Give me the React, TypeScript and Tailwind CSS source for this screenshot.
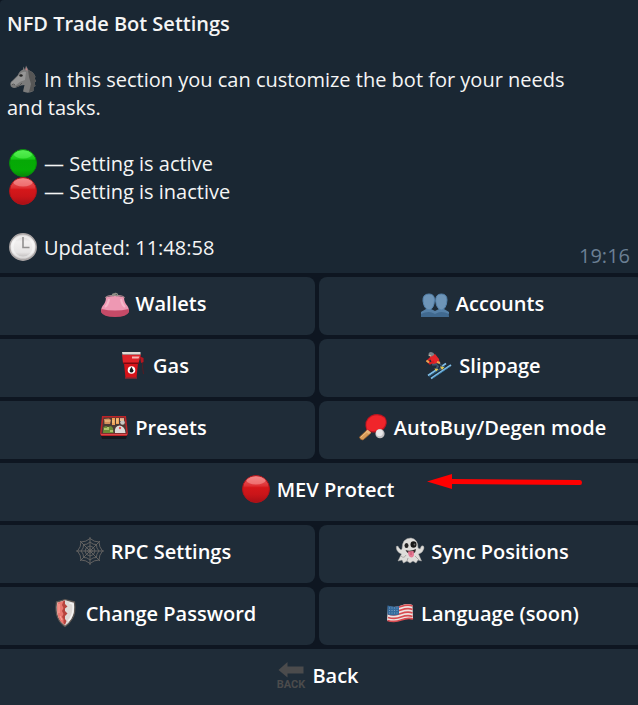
import type { ReactNode } from "react";

function Icon({ children }: { children: ReactNode }) {
  return (
    <svg viewBox="0 0 28 28" className="-mt-px mr-px ml-0.5 size-7 shrink-0 overflow-visible" aria-hidden="true">
      {children}
    </svg>
  );
}

function Horse() {
  return (
    <Icon>
      <path d="M16 5 17 0.5 19.5 5Q25 7 26.5 12L25.5 13 27 16 25.5 18 26.5 21 24.5 22 24.5 26Q19 29 14 26.5L15.5 20Q12 20 8.5 22 4 24 2 21.500Q0 18 3.500 15.500L9 10Q10 6 14 4.500L14.500 1.500Z" fill="#7b7b7b" />
      <path d="M19 5Q25 7 26.500 12L25.500 13 27 16 25.500 18 26.500 21 24.500 22V26L20 27 22 19 20 12Z" fill="#565656" />
      <path d="M10 10Q13 6 17 7L16 15Q11 16 7 20L3 20Q1 18 4 16Z" fill="#969696" />
      <path d="M16.500 5 17 2 18.500 5.500Z" fill="#c77d83" />
      <ellipse cx="12" cy="10.500" rx="1.700" ry="1.300" fill="#242424" />
      <path d="M3 19.500Q5 18.500 6 20M7 22Q11 21 13 18" fill="none" stroke="#545454" />
    </Icon>
  );
}

function GreenCircle() {
  return (
    <Icon>
      <defs>
        <linearGradient id="green" x2="0" y2="1">
          <stop stopColor="#48e548" />
          <stop offset=".35" stopColor="#15c815" />
          <stop offset=".4" stopColor="#06a806" />
          <stop offset=".75" stopColor="#05ac05" />
          <stop offset="1" stopColor="#088808" />
        </linearGradient>
      </defs>
      <circle cx="14" cy="14" r="13.500" fill="url(#green)" stroke="#078b0b" />
      <ellipse cx="14" cy="5.500" rx="9" ry="4" fill="#6cff65" opacity=".45" />
    </Icon>
  );
}

function RedCircle() {
  return (
    <Icon>
      <defs>
        <linearGradient id="red" x2="0" y2="1">
          <stop stopColor="#e9696b" />
          <stop offset=".38" stopColor="#df3033" />
          <stop offset=".45" stopColor="#d5171a" />
          <stop offset=".7" stopColor="#ca1519" />
          <stop offset="1" stopColor="#a80f16" />
        </linearGradient>
      </defs>
      <circle cx="14" cy="14" r="13.500" fill="url(#red)" stroke="#b01319" />
      <ellipse cx="14" cy="5.500" rx="9.500" ry="4" fill="#ffb0ad" opacity=".45" />
    </Icon>
  );
}

function Clock() {
  return (
    <Icon>
      <defs>
        <linearGradient id="clock" x2="0" y2="1">
          <stop stopColor="#d0cdcd" />
          <stop offset=".3" stopColor="#f2f0f0" />
          <stop offset=".7" stopColor="#e6e4e4" />
          <stop offset="1" stopColor="#aaa6a6" />
        </linearGradient>
      </defs>
      <circle cx="14" cy="14" r="13.200" fill="url(#clock)" stroke="#aaa5a5" strokeWidth="1.500" />
      <circle cx="14" cy="14" r="10.500" fill="none" stroke="#fff" strokeWidth="2" opacity=".45" />
      <path d="M14 4V14.500H20.500" fill="none" stroke="#929090" strokeWidth="1.600" />
    </Icon>
  );
}

function Purse() {
  return (
    <Icon>
      <path d="M5 8Q14 6 23 8 23 13.500 26.500 17 29 21 27 24L1 24Q-1 21 1.500 17 5 13.500 5 8Z" fill="#ee98b3" />
      <path d="M.3 20Q14 23 27.700 20L28 23Q26 28 14 28T0 23Z" fill="#c54a67" />
      <path d="M8 10Q7 16 4 18M20 10Q21 16 24 18" fill="none" stroke="#f6b7c9" strokeWidth="2" />
      <path d="M4.500 9Q6 6.500 10 6.500H18Q22 6.500 23.500 9" fill="none" stroke="#a8848c" strokeWidth="1.200" />
      <path d="M11.500 7Q11 4.500 13.500 5L16 7M16.500 7Q17 4 14 4.500L12 7" fill="none" stroke="#8f8f86" strokeWidth="1.300" />
    </Icon>
  );
}

function People() {
  return (
    <Icon>
      <path d="M0 28V24Q0 22.500 3 22L5.500 21V18H10V21L14 22.500 18 21V18H22.500V21L26 22.500Q28 23 28 28Z" fill="#40698f" />
      <path d="M0 25Q8 21 14 25 20 21 28 25V23L23 20H18L14 22 10 20H5L0 23Z" fill="#5580a7" />
      <path d="M8 5Q13.500 5 13.500 11 13 20 8 21 3 20 2 12 1.500 5 8 5Z" fill="#6e95b8" stroke="#5684ae" />
      <path d="M20.300 5Q26 5 26 11 25.500 20 20.300 21 15.500 20 14.700 12 14.500 5 20.300 5Z" fill="#6e95b8" stroke="#5684ae" />
    </Icon>
  );
}

function GasPump() {
  return (
    <Icon>
      <path d="M21.500 6.500 25 7.500 24.500 16 25.500 23" fill="none" stroke="#571a21" />
      <path d="M22 5.500 25.500 7V11L23 12Z" fill="#b81620" />
      <path d="M4 3.500H23L20.500 12H5Z" fill="#df2228" />
      <path d="M6 12H20L18.500 27H7.500Z" fill="#d61219" />
      <path d="M5 11.500H21V13H5Z" fill="#7c0910" />
      <path d="M4 1H22.500L22.500 3.500H4.500Z" fill="#dedbd5" />
      <path d="M14 5.500H21.500L20.500 7.500H14Z" fill="#f6b1af" />
      <path d="M7 27H19" stroke="#8f2731" strokeWidth="1.500" />
      <circle cx="13.500" cy="19" r="3.800" fill="#fff" />
      <path d="M13.500 15.700Q11.500 18.500 11.500 20 12 21.500 13.500 21.500 15.500 21.300 15.500 19.500Z" fill="#171b1c" />
    </Icon>
  );
}

function Skier() {
  return (
    <Icon>
      <path d="M4 24.500 22 12.500M7 27.500 27 14" fill="none" stroke="#7fbde6" strokeWidth="1.800" />
      <path d="M5 25.500 21 15M9 27 26 15.500" fill="none" stroke="#28709e" strokeWidth=".7" />
      <path d="M8 11 15 10 18.500 15 17 19 11 19 13 14.500 8 14.500Z" fill="#3d5770" />
      <path d="M13 12 16 15 14 18.500" fill="none" stroke="#1b2b3c" strokeWidth="1.500" />
      <path d="M6 5 11 3 15 8 15.500 11.500 9 13 6 8Z" fill="#e5262a" />
      <path d="M6.500 7 3.500 10 6 12.500 10 10.500" fill="none" stroke="#d91d22" strokeWidth="2" />
      <path d="M2.500 9.500 5 11.500M13 11 16 12" stroke="#e6a84f" strokeWidth="2" />
      <path d="M4.500 5Q4 1 7 1 10.500 1.500 10 4L7.500 5.500Z" fill="#78838a" />
      <path d="M5 4 7 5" stroke="#d2b69b" strokeWidth="1.300" />
      <path d="M10.500 17.500 14.500 18 12 20.500ZM16 15.500 20.500 16 18 19Z" fill="#e2c850" />
    </Icon>
  );
}

function Bento() {
  return (
    <Icon>
      <path d="M1 23H27L26 26H2Z" fill="#15191f" />
      <path d="M2 3H26L28 21 26.500 23H1.500L0 21Z" fill="#bd2327" />
      <path d="M3.500 4.500H24.500L26.500 20.500H1.500Z" fill="#4c3a35" />
      <path d="M4 6 9 5.500 11 7 10 11 4.500 11Z" fill="#d28f5c" />
      <path d="M12 5H15V12H12ZM16 5H19V11H16Z" fill="#eea259" />
      <path d="M20 5H24V8H20Z" fill="#d9a58f" />
      <circle cx="22.500" cy="9.500" r="2.300" fill="#c8c7c4" />
      <path d="M5 8H10M13 7V10M17 6V10M20 7H24" stroke="#f1cd90" />
      <path d="M3.500 14 6 13 8 14 11 13 13 15 13.500 20H3Z" fill="#6d8c37" />
      <path d="M4 16H7M8 14V17M10 18H13" stroke="#c5d47c" strokeWidth="1.500" />
      <path d="M15 20Q14 13 19.500 12.500 25 13 25.500 20Z" fill="#dedcda" />
      <circle cx="20" cy="15" r="1.200" fill="#e15258" />
      <path d="M1 21.500H27" stroke="#f26364" opacity=".6" />
    </Icon>
  );
}

function PingPong() {
  return (
    <Icon>
      <path d="M9 16 12 20 4 27Q1 27 .5 24Z" fill="#d89b58" stroke="#9c622e" strokeWidth=".7" />
      <path d="M7.500 17.500Q4 7 12 2.500 20-1 26 4 30 10 25 16 19 21 11.500 19Z" fill="#be1520" />
      <path d="M8 15.500Q5.500 8 12.500 3.500 20 .5 25.500 5 28.500 10 24 15 18 19.500 10.500 17.500Z" fill="#f0252b" />
      <path d="M8.500 16.500 12 19.500 9.500 21 7 18.500Z" fill="#e7b57a" />
      <path d="M1.500 24.500 8 18.500" stroke="#f1c384" />
      <circle cx="21" cy="20.700" r="4.600" fill="#c3c0c2" />
      <circle cx="20.500" cy="19.800" r="3.400" fill="#e9e7e9" />
    </Icon>
  );
}

function Web() {
  return (
    <Icon>
      <g fill="none" stroke="#6a6865" strokeWidth=".9">
        <path d="M14 0V28M0 14H28M4 4 24 24M24 4 4 24" />
        <path d="M14 1.500Q18 5 23 5 23 10 26.500 14 23 18 23 23 18 23 14 26.500 10 23 5 23 5 18 1.500 14 5 10 5 5 10 5 14 1.500Z" />
        <path d="M14 5Q17 8 20.500 7.500 20 11 23 14 20 17 20.500 20.500 17 20 14 23 11 20 7.500 20.500 8 17 5 14 8 11 7.500 7.500 11 8 14 5Z" />
        <path d="M14 9 17.500 10.500 19 14 17.500 17.500 14 19 10.500 17.500 9 14 10.500 10.500Z" />
        <path d="M14 11.500 16.500 14 14 16.500 11.500 14Z" />
      </g>
    </Icon>
  );
}

function Ghost() {
  return (
    <Icon>
      <path d="M6 12Q6 1 15 1 22 2 22 11L24 12 25.500 9Q28 8 28 11 27 16 22.500 17L25.500 24 22 23 20 26 17 24 14 26 11 24 7.500 26 6 23 2 24 5.500 17Q0 15 .3 9.500 2 8 3 11L5 13Z" fill="#deddda" stroke="#aaa8a6" strokeWidth=".5" />
      <path d="M5 19Q8 22 10 18M19 19 23 23M11 24 12 21" fill="none" stroke="#aaa8a5" />
      <ellipse cx="10.500" cy="8.500" rx="2" ry="2.500" fill="#222" />
      <ellipse cx="17.500" cy="7.500" rx="3" ry="3.200" fill="#171717" />
      <circle cx="18.500" cy="7.500" r=".9" fill="#686868" />
      <path d="M9.500 13Q14 15 20 12 20 15 17.500 16.500 12 18 9.500 13Z" fill="#34282b" />
      <path d="M12 14.500 17.500 14Q19 20 15.500 20.500 12 20 12 14.500Z" fill="#e57893" />
      <path d="M15 15V18" stroke="#b3435f" strokeWidth=".7" />
    </Icon>
  );
}

function Shield() {
  return (
    <Icon>
      <path d="M5.500 3Q10 2 14 .5 19 2 23.500 3 25 14 21 20 18 25 14 27.500 9 24 7 19 4 13 5.500 3Z" fill="#ded9d6" stroke="#5c5551" strokeWidth="1.300" />
      <path d="M6.500 3.500Q11 2.500 13.500 1.500V26Q8 22 7 17 5.500 12 6.500 3.500Z" fill="#e97870" />
      <path d="M12.500 2 14 1.500V5L16.500 7.500 14 9.500V12L16.500 14.500 14 17V20L15.500 22 14 26 12.500 24 12.500 20 11 18 12.500 15 11 12 12.500 9 11 6Z" fill="#b7433d" />
      <path d="M8 5V14M9 17 11 21" stroke="#ffa69a" />
      <path d="M18.500 4 22 5Q23 14 19 20L17 22" fill="none" stroke="#fff" strokeWidth="1.500" opacity=".7" />
    </Icon>
  );
}

function Flag() {
  return (
    <Icon>
      <path d="M2 7Q9 9 15 6.500 22 4 26.500 6L27 20Q22 18.500 16 20.500 8 24 1 21.500Z" fill="#eee4e2" />
      <path d="M2 8Q9 10 15 7.500 22 5 26.500 7M2 11.500Q9 13.500 15 11 22 8.500 26.500 10.500M2 15Q9 17 15 14.500 22 12 26.500 14M2 18.500Q9 20.500 15 18 22 15.500 26.500 17.500M1.500 21.500Q9 23.500 15 21 22 18.500 27 20" fill="none" stroke="#d84b50" strokeWidth="1.800" />
      <path d="M1.500 6.500Q8 8.500 13 7V15.500Q7 17.500 1.500 15.500Z" fill="#356b9d" />
      <path d="M3 9 12 9M3 11.500 12 11.500M3 14 12 14" stroke="#8db0cc" strokeWidth=".8" strokeDasharray="1 1.500" />
    </Icon>
  );
}

function BackArrow() {
  return (
    <Icon>
      <path d="M1.500 9 10.500 1V5.500H26.500V12.500H10.500V16.500Z" fill="#4b4b4c" />
      <text x="14" y="27" textAnchor="middle" className="fill-[#4b4b4c] font-['Roboto',sans-serif] text-[11px] leading-3 font-bold">
        BACK
      </text>
    </Icon>
  );
}

const buttons = [
  { label: "Wallets", icon: <Purse /> },
  { label: "Accounts", icon: <People /> },
  { label: "Gas", icon: <GasPump /> },
  { label: "Slippage", icon: <Skier /> },
  { label: "Presets", icon: <Bento /> },
  { label: "AutoBuy/Degen mode", icon: <PingPong /> },
  { label: "MEV Protect", icon: <RedCircle />, wide: true, marked: true },
  { label: "RPC Settings", icon: <Web /> },
  { label: "Sync Positions", icon: <Ghost /> },
  { label: "Change Password", icon: <Shield /> },
  { label: "Language (soon)", icon: <Flag /> },
  { label: "Back", icon: <BackArrow />, wide: true },
];

export default function App() {
  return (
    <main className="overflow-hidden bg-[#0e1621] font-['Open_Sans',sans-serif] text-xl leading-7 text-[#f5f5f5]">
      <section className="rounded-tl bg-[#1a2733] pt-[10px] pr-2 pb-[3px] pl-[7px]">
        <h1 className="font-semibold">NFD Trade Bot Settings</h1>
        <p className="mt-7 max-w-[580px]">
          <span className="mr-1.5 inline-block h-7 align-top"><Horse /></span>
          In this section you can customize the bot for your needs and tasks.
        </p>
        <ul className="mt-7">
          <li className="flex h-7 gap-1.5"><GreenCircle />— Setting is active</li>
          <li className="flex h-7 gap-1.5"><RedCircle />— Setting is inactive</li>
        </ul>
        <div className="mt-7 flex justify-between">
          <p className="flex gap-1.5"><Clock />Updated: 11:48:58</p>
          <time className="mt-2 text-[#6b7f93]">19:16</time>
        </div>
      </section>

      {/* outer edges of the keyboard run past the bubble */}
      <div className="mt-1 -mr-1.5 -ml-2.5 grid grid-cols-2 gap-1">
        {buttons.map(b => (
          <button
            key={b.label}
            type="button"
            className={`relative flex justify-center gap-1.5 rounded-lg bg-[#1f2c38] pt-[13px] pb-[17px] font-semibold text-white ${b.wide ? "col-span-2" : ""}`}
          >
            {b.icon}
            {b.label}
            {b.marked && (
              <svg viewBox="0 0 156 16" className="absolute top-[11px] left-1/2 ml-[110px] h-4 w-39" aria-hidden="true">
                <path d="M0 7.500 25 0V5L153 6Q155 6 155 8.500T153 11L25 10V15Z" fill="#f00" />
              </svg>
            )}
          </button>
        ))}
      </div>
    </main>
  );
}
